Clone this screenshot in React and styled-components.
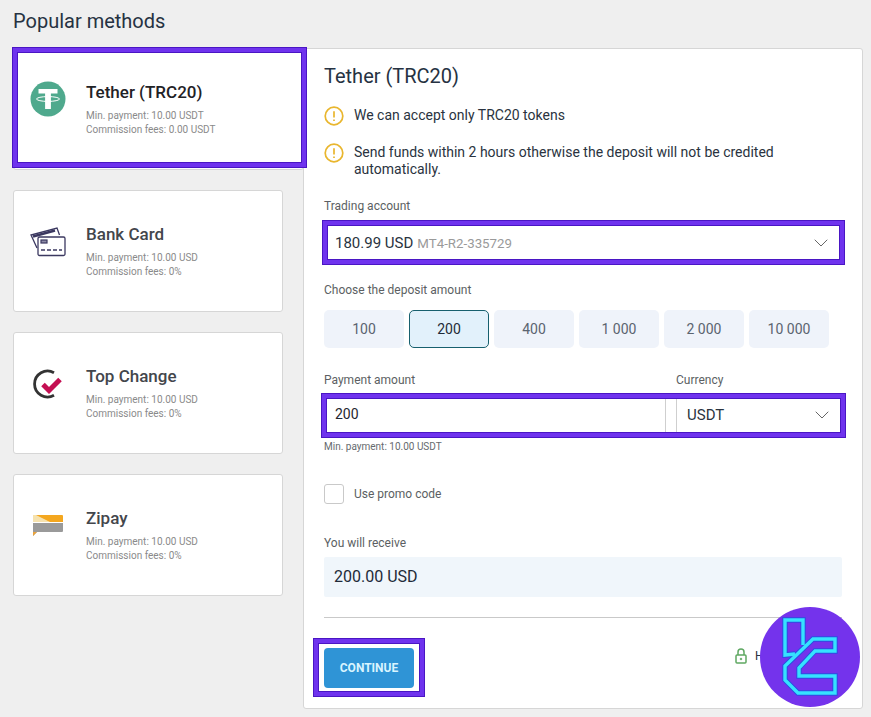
import React from 'react'
import styled, { createGlobalStyle, css } from 'styled-components'
import { ChevronDown } from 'lucide-react'

const GlobalStyle = createGlobalStyle`
  html, body {
    margin: 0;
    padding: 0;
    background: #efefef;
    font-family: Roboto, "Liberation Sans", sans-serif;
    color: #222b38;
  }
  * { box-sizing: border-box; }
`

// purple annotation frame drawn over a part of the form
const marked = css`
  position: relative;
  &::after {
    content: "";
    position: absolute;
    inset: ${(p) => p.$frame};
    border: 5px solid #6f33ee;
    outline: 1px solid #4a16c4;
    outline-offset: -1px;
    box-shadow: inset 0 0 0 1px #4a16c4;
    pointer-events: none;
    z-index: 2;
  }
`

const Page = styled.div`
  width: 871px;
  height: 717px;
  padding: 9px 8px 0 13px;
  overflow: hidden;
`

const Heading = styled.h2`
  margin: 0 0 15px;
  font-size: 20px;
  line-height: 24px;
  font-weight: 400;
  color: #263242;
`

const Columns = styled.div`
  display: flex;
  align-items: flex-start;
`

const Sidebar = styled.div`
  width: 290px;
  flex: none;
  display: flex;
  flex-direction: column;
  gap: 20px;
`

const Card = styled.div`
  width: ${(p) => (p.$active ? '291px' : '270px')};
  height: 122px;
  display: flex;
  align-items: flex-start;
  padding-top: 31px;
  background: #fff;
  border: 1px solid #d6d6d6;
  border-radius: 3px;
  z-index: ${(p) => (p.$active ? 1 : 0)};
  ${(p) => p.$active && marked}
`

const IconSlot = styled.div`
  width: 72px;
  flex: none;
  display: flex;
  justify-content: center;
  padding-right: 4px;
  margin-top: ${(p) => p.$top}px;
`

const CardName = styled.div`
  font-size: 17px;
  line-height: 24px;
  font-weight: 500;
  color: ${(p) => (p.$active ? '#1f2226' : '#43464c')};
  margin-bottom: 5px;
`

const CardNote = styled.div`
  font-size: 10px;
  line-height: 14px;
  color: #8a8a8a;
`

const Panel = styled.div`
  position: relative;
  width: 560px;
  height: 661px;
  flex: none;
  background: #fff;
  border: 1px solid #d6d6d6;
  border-radius: 3px;
  padding: 14px 20px 0 20px;
`

const PanelTitle = styled.h3`
  margin: 0 0 17px;
  font-size: 20px;
  line-height: 26px;
  font-weight: 400;
  color: #263242;
`

const Notice = styled.div`
  display: flex;
  gap: 10px;
  font-size: 14px;
  line-height: 17px;
  color: #2a3340;
  margin-bottom: ${(p) => p.$gap};
`

const NoticeText = styled.span`
  padding-top: 1px;
`

const NoticeIcon = styled.svg`
  width: 20px;
  height: 20px;
  flex: none;
`

const Label = styled.div`
  font-size: 12px;
  line-height: 14px;
  color: #5c5f63;
  margin-top: ${(p) => p.$top || '0'};
  margin-bottom: ${(p) => p.$gap || '6px'};
`

const Select = styled.div`
  height: 35px;
  display: flex;
  align-items: center;
  justify-content: space-between;
  padding: 0 9px 0 11px;
  font-size: 15px;
  color: #2a3340;
  ${marked}
`

const Account = styled.span`
  margin-left: 4px;
  color: #9a9a9a;
  font-size: 13.3px;
`

const Chips = styled.div`
  display: flex;
  gap: 5px;
  margin-bottom: 25px;
`

const Chip = styled.div`
  width: 80px;
  height: 38px;
  display: flex;
  align-items: center;
  justify-content: center;
  font-size: 14px;
  border-radius: 5px;
  color: ${(p) => (p.$active ? '#1e2b38' : '#5b6470')};
  background: ${(p) => (p.$active ? '#e2f1fb' : '#eff3fa')};
  border: ${(p) => (p.$active ? '1px solid #17606e' : 'none')};
`

const PaymentGrid = styled.div`
  display: grid;
  grid-template-columns: 342px 167px;
  column-gap: 10px;
`

const PaymentRow = styled.div`
  grid-column: 1 / 3;
  display: grid;
  grid-template-columns: 342px 167px;
  column-gap: 10px;
  height: 35px;
  ${marked}
`

const AmountInput = styled.div`
  display: flex;
  align-items: center;
  padding: 0 0 4px 11px;
  font-size: 14px;
  color: #1f2630;
  border-right: 1px solid #cfcfcf;
`

const CurrencySelect = styled.div`
  display: flex;
  align-items: center;
  justify-content: space-between;
  padding: 0 9px 2px 10px;
  font-size: 15px;
  color: #2a3340;
  border-left: 1px solid #cfcfcf;
`

const Hint = styled.div`
  font-size: 10px;
  line-height: 12px;
  color: #666a6e;
  margin: 8px 0 31px;
`

const PromoRow = styled.div`
  display: flex;
  align-items: center;
  gap: 10px;
  font-size: 12px;
  color: #5c5f63;
  margin-bottom: 32px;
`

const Checkbox = styled.span`
  width: 20px;
  height: 20px;
  background: #fff;
  border: 1px solid #c9c9c9;
  border-radius: 3px;
`

const Receive = styled.div`
  height: 40px;
  display: flex;
  align-items: center;
  padding: 0 0 2px 10px;
  font-size: 16px;
  color: #222b38;
  background: #f0f6fb;
  border-radius: 2px;
`

const Divider = styled.hr`
  margin: 20px 0 30px;
  border: none;
  border-top: 1px solid #c9c9c9;
`

const Footer = styled.div`
  display: flex;
  justify-content: space-between;
  align-items: flex-start;
`

const ButtonFrame = styled.div`
  ${marked}
`

const ContinueButton = styled.button`
  display: block;
  width: 90px;
  height: 40px;
  padding: 0;
  border: none;
  border-radius: 4px;
  background: #2f94d6;
  color: #d9f4ff;
  font-family: inherit;
  font-size: 12px;
  font-weight: 700;
`

const Secure = styled.div`
  display: flex;
  align-items: center;
  gap: 8px;
  font-size: 12px;
  color: #2a3340;
  width: 113px;
  height: 18px;
  margin: -1px -6px 0 0;
`

const Badge = styled.svg`
  position: absolute;
  right: 2px;
  bottom: 1px;
  width: 100px;
  height: 100px;
  z-index: 3;
`

const TetherIcon = () => (
  <svg width="36" height="36" viewBox="0 0 36 36">
    <circle cx="18" cy="18" r="17.5" fill="#4fa98d" />
    <path d="M8.5 8h19v4.6h-6.6V28h-5.8V12.6H8.5z" fill="#fff" />
    <ellipse cx="18" cy="18" rx="11.5" ry="2.4" fill="none" stroke="#fff" strokeWidth="1" />
  </svg>
)

const BankCardIcon = () => (
  <svg width="36" height="30" viewBox="0 0 36 30" fill="none" stroke="#3b3860" strokeWidth="1.3">
    <path d="M7 21 1 8 27 1l2.5 7" fill="#fff" />
    <path d="M3 9.5 25 3.5" strokeWidth="2.4" />
    <rect x="8" y="10" width="27" height="18.5" rx="1.5" fill="#fff" />
    <rect x="11" y="13" width="6" height="3" strokeWidth="1.2" fill="#8d8ba6" />
    <path d="M11 23h4m2 0h4m2 0h4m2 0h3" />
  </svg>
)

const TopChangeIcon = () => (
  <svg width="30" height="30" viewBox="0 0 30 30" fill="none">
    <path d="M21 3.7A13 13 0 1 0 21 26.3" stroke="#333" strokeWidth="2.8" />
    <path d="m10 15.5 6 6L27 10.5" stroke="#c40f52" strokeWidth="5" />
  </svg>
)

const ZipayIcon = () => (
  <svg width="30" height="24" viewBox="0 0 30 24">
    <path d="M0 2a1 1 0 0 1 1-1h28a1 1 0 0 1 1 1v6H14z" fill="#f4a71f" />
    <path d="M0 1h3l14 7H0z" fill="#f6e2ae" />
    <path d="M0 9h30v8a1 1 0 0 1-1 1H4l-4 4z" fill="#9a9a9a" />
    <path d="M0 18h4l-4 4z" fill="#e9a33c" />
  </svg>
)

const LockIcon = () => (
  <svg width="12" height="16" viewBox="0 0 12 16" fill="none" stroke="#5fa862" strokeWidth="1.5">
    <path d="M3 7V4a3 3 0 0 1 6 0v3" />
    <rect x="1" y="7" width="10" height="8" rx="1" />
    <circle cx="6" cy="11" r="0.9" fill="#5fa862" strokeWidth="0.6" />
  </svg>
)

const methods = [
  { name: 'Tether (TRC20)', min: '10.00 USDT', fees: '0.00 USDT', icon: <TetherIcon />, top: 1, active: true },
  { name: 'Bank Card', min: '10.00 USD', fees: '0%', icon: <BankCardIcon />, top: 5 },
  { name: 'Top Change', min: '10.00 USD', fees: '0%', icon: <TopChangeIcon />, top: 5 },
  { name: 'Zipay', min: '10.00 USD', fees: '0%', icon: <ZipayIcon />, top: 8 },
]

const amounts = ['100', '200', '400', '1 000', '2 000', '10 000']

const WarnIcon = () => (
  <NoticeIcon viewBox="0 0 20 20" fill="none">
    <circle cx="10" cy="10" r="8.8" stroke="#e9b62e" strokeWidth="1.7" />
    <path d="M10 5.2v6.2M10 13.4v1.6" stroke="#e9b62e" strokeWidth="1.7" />
  </NoticeIcon>
)

export default function App() {
  return (
    <Page>
      <GlobalStyle />
      <Heading>Popular methods</Heading>
      <Columns>
        <Sidebar>
          {methods.map((m) => (
            <Card key={m.name} $active={m.active} $frame="-2px -4px 1px -2px">
              <IconSlot $top={m.top}>{m.icon}</IconSlot>
              <div>
                <CardName $active={m.active}>{m.name}</CardName>
                <CardNote>Min. payment: {m.min}</CardNote>
                <CardNote>Commission fees: {m.fees}</CardNote>
              </div>
            </Card>
          ))}
        </Sidebar>
        <Panel>
          <PanelTitle>Tether (TRC20)</PanelTitle>
          <Notice $gap="17px">
            <WarnIcon />
            <NoticeText>We can accept only TRC20 tokens</NoticeText>
          </Notice>
          <Notice $gap="21px">
            <WarnIcon />
            <NoticeText>Send funds within 2 hours otherwise the deposit will not be credited automatically.</NoticeText>
          </Notice>
          <Label $gap="12px">Trading account</Label>
          <Select $frame="-5px -3px -5px -2px">
            <span>
              180.99 USD<Account>MT4-R2-335729</Account>
            </span>
            <ChevronDown size={24} strokeWidth={1} color="#666" />
          </Select>
          <Label $top="23px" $gap="13px">Choose the deposit amount</Label>
          <Chips>
            {amounts.map((a) => (
              <Chip key={a} $active={a === '200'}>{a}</Chip>
            ))}
          </Chips>
          <PaymentGrid>
            <Label $gap="11px">Payment amount</Label>
            <Label $gap="11px">Currency</Label>
            <PaymentRow $frame="-5px -3px -5px -3px">
              <AmountInput>200</AmountInput>
              <CurrencySelect>
                USDT
                <ChevronDown size={24} strokeWidth={1} color="#666" />
              </CurrencySelect>
            </PaymentRow>
          </PaymentGrid>
          <Hint>Min. payment: 10.00 USDT</Hint>
          <PromoRow>
            <Checkbox />
            Use promo code
          </PromoRow>
          <Label $gap="7px">You will receive</Label>
          <Receive>200.00 USD</Receive>
          <Divider />
          <Footer>
            <ButtonFrame $frame="-10px -11px -9px -11px">
              <ContinueButton>CONTINUE</ContinueButton>
            </ButtonFrame>
            <Secure>
              <LockIcon />
              Help
            </Secure>
          </Footer>
          <Badge viewBox="0 0 100 100" fill="none">
            <circle cx="50" cy="50" r="50" fill="#7433ec" />
            <g stroke="#2b4fe0" strokeWidth="5.4">
              <path d="M35 47 25 48V13h18v25" />
              <path d="M75 32H53L25 59v14l13 13h37V69H39v-8l16-17h20z" />
            </g>
            <g stroke="#35e2ff" strokeWidth="3.4">
              <path d="M35 47 25 48V13h18v25" />
              <path d="M75 32H53L25 59v14l13 13h37V69H39v-8l16-17h20z" />
            </g>
          </Badge>
        </Panel>
      </Columns>
    </Page>
  )
}
